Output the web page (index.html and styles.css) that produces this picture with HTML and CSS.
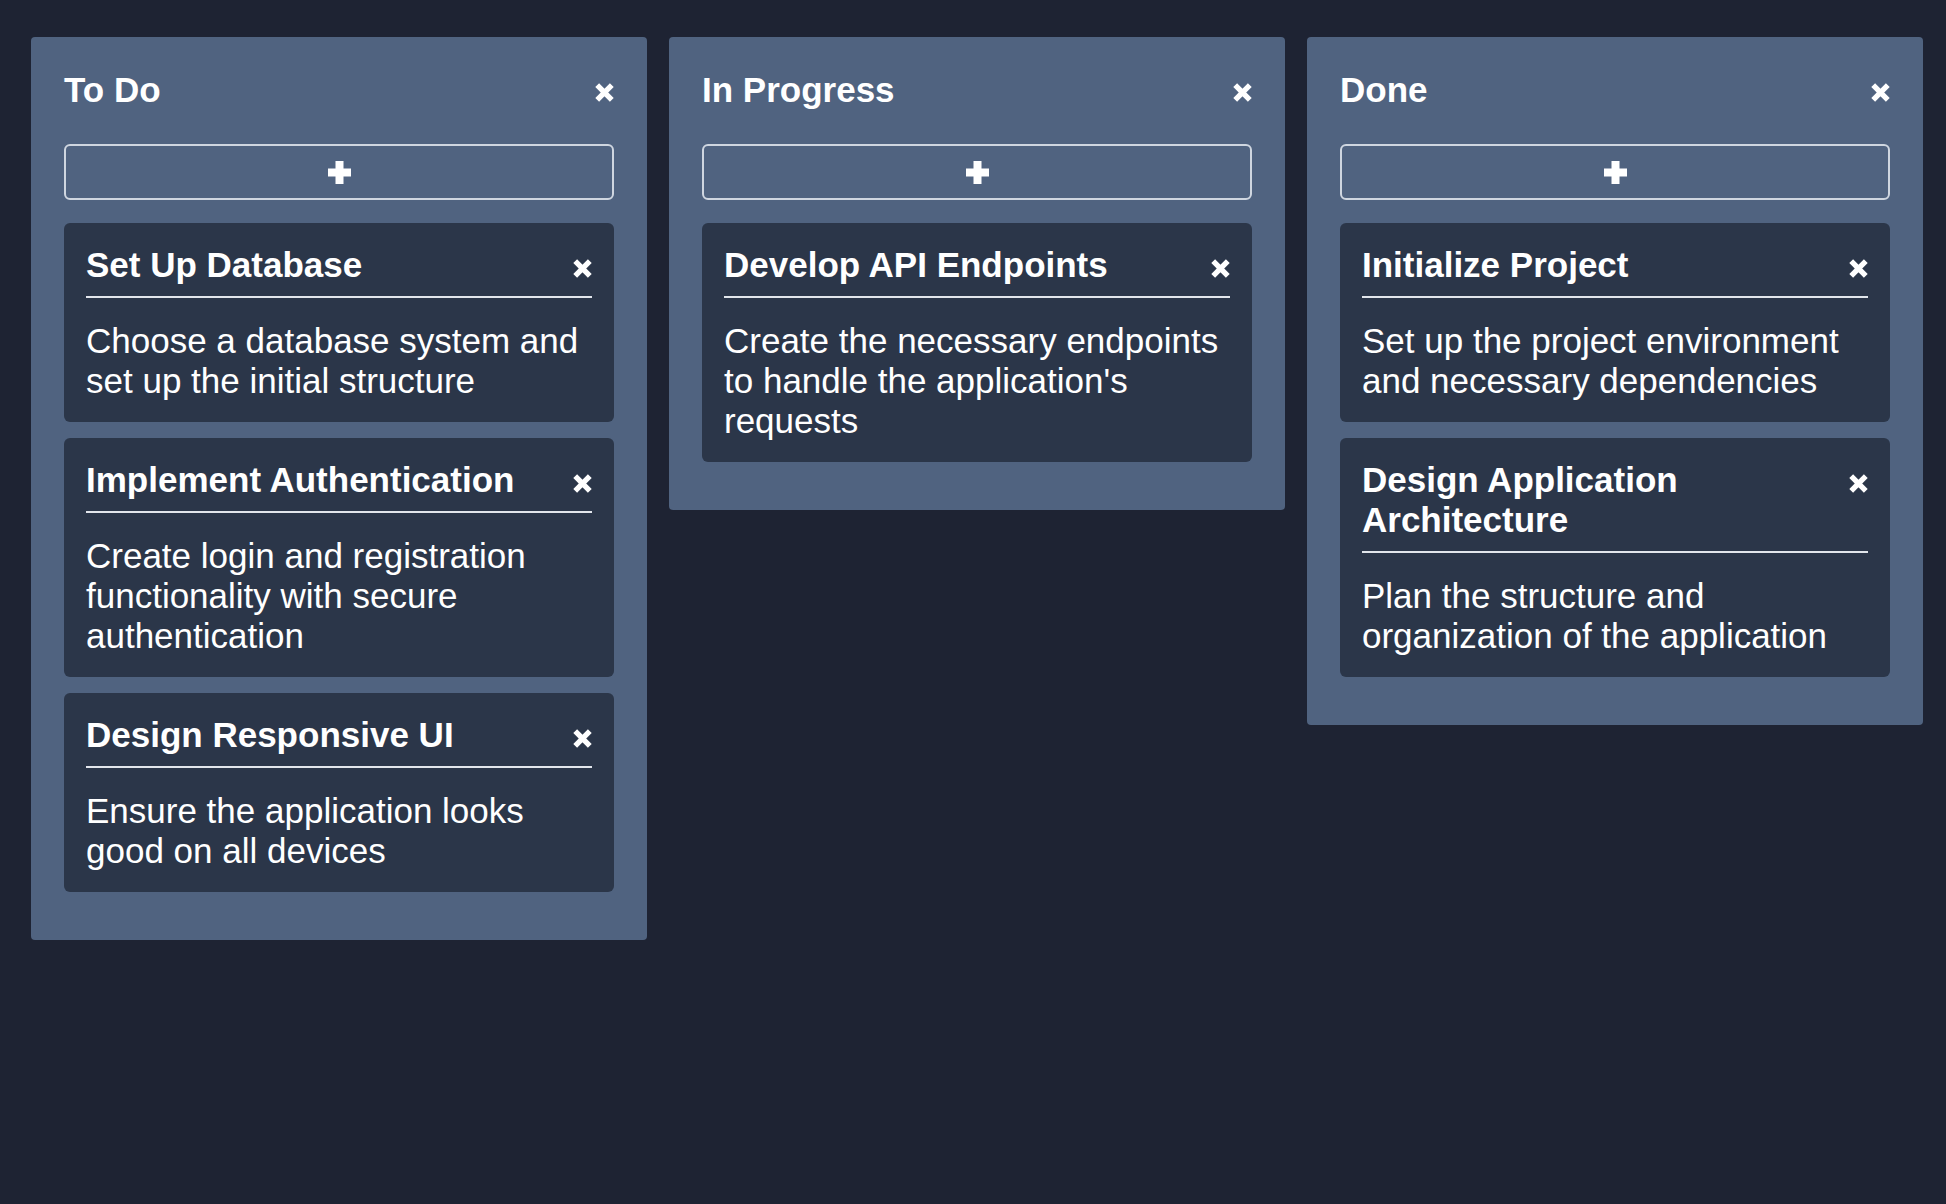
FILE: index.html
```html
<!DOCTYPE html>
<html lang="en">
<head>
<meta charset="utf-8">
<title>Kanban Board</title>
<link rel="stylesheet" href="styles.css">
</head>
<body>
<main class="board">
  <section class="column">
    <header class="column-header">
      <h2 class="column-title">To Do</h2>
      <button class="close-btn" aria-label="Remove column"><svg viewBox="0 0 19 19" width="19" height="19"><path d="M2.2 2.2L16.8 16.8M16.8 2.2L2.2 16.8"/></svg></button>
    </header>
    <button class="add-btn" aria-label="Add card"><svg viewBox="0 0 23 23" width="23" height="23"><rect x="0" y="7.5" width="23" height="8"/><rect x="7.5" y="0" width="8" height="23"/></svg></button>
    <div class="card-list">
      <article class="card">
        <div class="card-header">
          <h3 class="card-title">Set Up Database</h3>
          <button class="close-btn card-close" aria-label="Remove card"><svg viewBox="0 0 19 19" width="19" height="19"><path d="M2.2 2.2L16.8 16.8M16.8 2.2L2.2 16.8"/></svg></button>
        </div>
        <p class="card-desc">Choose a database system and set up the initial structure</p>
      </article>
      <article class="card">
        <div class="card-header">
          <h3 class="card-title">Implement Authentication</h3>
          <button class="close-btn card-close" aria-label="Remove card"><svg viewBox="0 0 19 19" width="19" height="19"><path d="M2.2 2.2L16.8 16.8M16.8 2.2L2.2 16.8"/></svg></button>
        </div>
        <p class="card-desc">Create login and registration functionality with secure authentication</p>
      </article>
      <article class="card">
        <div class="card-header">
          <h3 class="card-title">Design Responsive UI</h3>
          <button class="close-btn card-close" aria-label="Remove card"><svg viewBox="0 0 19 19" width="19" height="19"><path d="M2.2 2.2L16.8 16.8M16.8 2.2L2.2 16.8"/></svg></button>
        </div>
        <p class="card-desc">Ensure the application looks good on all devices</p>
      </article>
    </div>
  </section>

  <section class="column">
    <header class="column-header">
      <h2 class="column-title">In Progress</h2>
      <button class="close-btn" aria-label="Remove column"><svg viewBox="0 0 19 19" width="19" height="19"><path d="M2.2 2.2L16.8 16.8M16.8 2.2L2.2 16.8"/></svg></button>
    </header>
    <button class="add-btn" aria-label="Add card"><svg viewBox="0 0 23 23" width="23" height="23"><rect x="0" y="7.5" width="23" height="8"/><rect x="7.5" y="0" width="8" height="23"/></svg></button>
    <div class="card-list">
      <article class="card">
        <div class="card-header">
          <h3 class="card-title">Develop API Endpoints</h3>
          <button class="close-btn card-close" aria-label="Remove card"><svg viewBox="0 0 19 19" width="19" height="19"><path d="M2.2 2.2L16.8 16.8M16.8 2.2L2.2 16.8"/></svg></button>
        </div>
        <p class="card-desc">Create the necessary endpoints to handle the application's requests</p>
      </article>
    </div>
  </section>

  <section class="column">
    <header class="column-header">
      <h2 class="column-title">Done</h2>
      <button class="close-btn" aria-label="Remove column"><svg viewBox="0 0 19 19" width="19" height="19"><path d="M2.2 2.2L16.8 16.8M16.8 2.2L2.2 16.8"/></svg></button>
    </header>
    <button class="add-btn" aria-label="Add card"><svg viewBox="0 0 23 23" width="23" height="23"><rect x="0" y="7.5" width="23" height="8"/><rect x="7.5" y="0" width="8" height="23"/></svg></button>
    <div class="card-list">
      <article class="card">
        <div class="card-header">
          <h3 class="card-title">Initialize Project</h3>
          <button class="close-btn card-close" aria-label="Remove card"><svg viewBox="0 0 19 19" width="19" height="19"><path d="M2.2 2.2L16.8 16.8M16.8 2.2L2.2 16.8"/></svg></button>
        </div>
        <p class="card-desc">Set up the project environment and necessary dependencies</p>
      </article>
      <article class="card">
        <div class="card-header">
          <h3 class="card-title">Design Application Architecture</h3>
          <button class="close-btn card-close" aria-label="Remove card"><svg viewBox="0 0 19 19" width="19" height="19"><path d="M2.2 2.2L16.8 16.8M16.8 2.2L2.2 16.8"/></svg></button>
        </div>
        <p class="card-desc">Plan the structure and organization of the application</p>
      </article>
    </div>
  </section>
</main>
</body>
</html>
```

FILE: styles.css
```css
html, body {
  margin: 0;
  padding: 0;
  background: #1e2333;
  min-height: 100%;
}

body {
  font-family: "Liberation Sans", Arial, Helvetica, sans-serif;
  color: #ffffff;
  min-height: 1204px;
}

.board {
  display: flex;
  align-items: flex-start;
  gap: 22px;
  padding: 37px 23px 0 31px;
}

.column {
  flex: 1 1 0;
  min-width: 0;
  background: #506380;
  border-radius: 4px;
  padding: 33px 33px 48px;
}

.column-header {
  display: flex;
  align-items: flex-start;
}

.column-title {
  flex: 1;
  margin: 0;
  font-size: 35px;
  line-height: 40px;
  font-weight: 700;
}

.close-btn {
  flex: none;
  width: 19px;
  height: 19px;
  padding: 0;
  margin: 13px 0 0 12px;
  border: none;
  background: transparent;
  cursor: pointer;
  display: block;
}

.close-btn svg {
  display: block;
  fill: none;
  stroke: #ffffff;
  stroke-width: 5.4;
  stroke-linecap: butt;
}

.add-btn {
  display: flex;
  align-items: center;
  justify-content: center;
  width: 100%;
  height: 56px;
  margin-top: 34px;
  padding: 0;
  background: transparent;
  border: 2px solid #cfd6e0;
  border-radius: 6px;
  cursor: pointer;
}

.add-btn svg {
  display: block;
  fill: #ffffff;
}

.card-list {
  display: flex;
  flex-direction: column;
  gap: 16.5px;
  margin-top: 23px;
}

.card {
  background: #2b3649;
  border-radius: 6px;
  padding: 22px 22px 21px;
}

.card-header {
  display: flex;
  align-items: flex-start;
  padding-bottom: 11px;
  border-bottom: 2px solid #e2e6ec;
}

.card-title {
  flex: 1;
  min-width: 0;
  margin: 0;
  font-size: 35px;
  line-height: 40px;
  font-weight: 700;
}

.card-close {
  margin-top: 14px;
}

.card-desc {
  margin: 22.5px 0 0;
  font-size: 35px;
  line-height: 40px;
  font-weight: 400;
}
```
